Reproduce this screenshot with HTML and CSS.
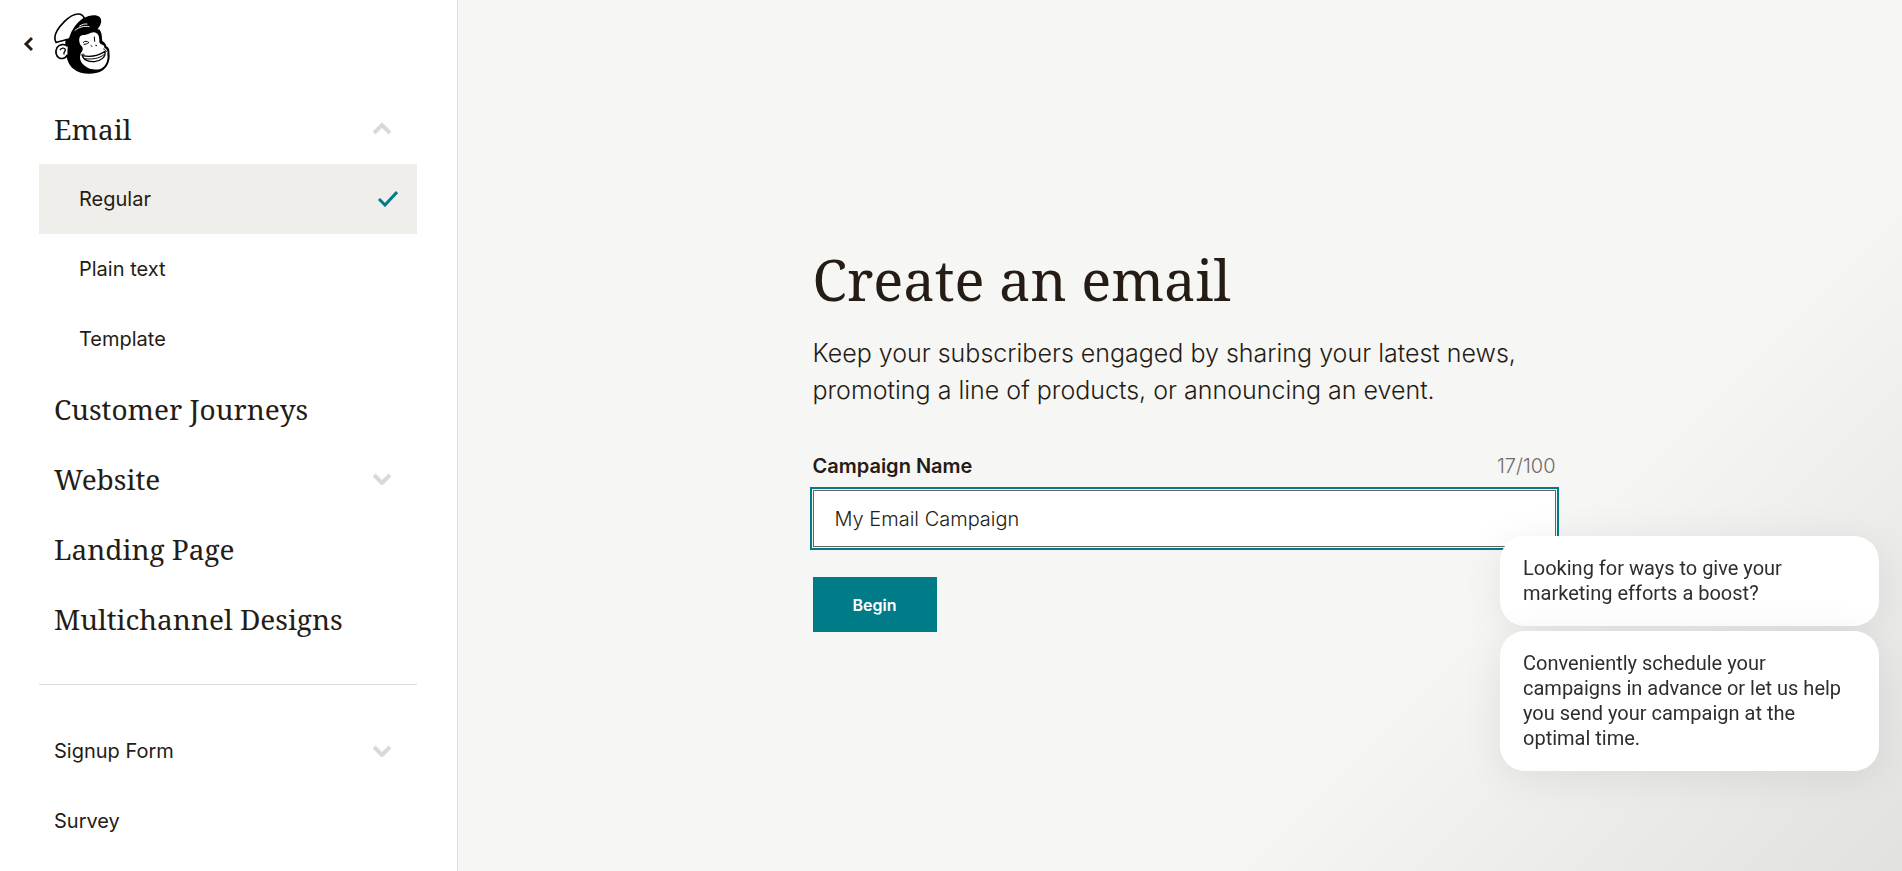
FILE: index.html
```
<!DOCTYPE html>
<html lang="en">
<head>
<meta charset="utf-8">
<meta name="viewport" content="width=device-width, initial-scale=1">
<title>Create an email</title>
<link rel="stylesheet" href="styles.css">
</head>
<body>
<div class="page">
  <aside class="sidebar">
    <header class="brand">
      <button class="back" type="button" aria-label="Back">
        <svg width="10" height="16" viewBox="0 0 10 16" fill="none" stroke="#241c15" stroke-width="3"><path d="M9 2 3 8l6 6"/></svg>
      </button>
      <a class="logo" href="#" aria-label="Home">
        <svg width="58" height="61" viewBox="9 10 174 183">
          <path fill="#000" d="M60 72C48 88 46 100 52 118c-2 22 4 46 22 60 22 18 62 18 84 6 18-10 27-32 23-56 1-10-3-16-9-18-1-8-6-12-12-16-2-12 0-22-8-34L100 46z"/>
          <path fill="#fff" d="M92 100c-4-14 0-24 12-24 10 2 18-8 30-8 12 1 18 10 17 28 0 4 4 7 9 9 5 2 7 5 6 10 7 2 11 8 9 18 3 20-4 36-19 44-16 6-36 2-48-8-10-8-16-18-15-28 0-12 10-16 8-26-2-7-8-8-9-15z"/>
          <path fill="#fff" stroke="#000" stroke-width="5" d="M21 98C12 82 24 58 46 36 62 20 78 12 90 13c8 1 14 6 16 14-20 12-36 32-44 60-12 4-30 8-41 11z"/>
          <path fill="#000" d="M104 25c16-9 38-12 48-3 9 9 4 27-8 38-14 10-28-1-42 3-14 5-24 12-36 24 4-24 18-49 38-62z"/>
          <path fill="none" stroke="#fff" stroke-width="3" stroke-linecap="round" d="M78 62c12-10 28-14 42-11M92 49c8-5 15-7 22-6"/>
          <path fill="#fff" stroke="#000" stroke-width="5" d="M56 110c-10-9-26-6-32 4-6 12-3 26 7 31 9 4 19 0 24-9"/>
          <path fill="none" stroke="#000" stroke-width="4" stroke-linecap="round" d="M34 120c4-7 15-6 15 1 0 5-6 6-4 12"/>
          <path fill="none" stroke="#000" stroke-width="3" stroke-linecap="round" d="M103 98c5-5 11-4 16 0M105 104c5 0 9-1 13-4M136 82l1 13M126 108l3 2M140 107l3 1"/>
          <path fill="#fff" stroke="#000" stroke-width="4" stroke-linejoin="round" d="M100 138c24 5 46 2 68-13 3 17-12 29-32 31-17 1-33-5-36-18z"/>
          <path fill="none" stroke="#000" stroke-width="3" stroke-linecap="round" d="M107 147c22 3 43 0 58-12M96 136c3-2 5-3 9-2M164 118c4 1 7 4 8 7"/>
        </svg>
      </a>
    </header>
    <nav class="menu" aria-label="Campaign types">
      <button class="item item-large" type="button" aria-expanded="true">Email
        <svg class="chevron" width="18" height="14" viewBox="0 0 18 14"><path d="m1 11 8-8 8 8"/></svg>
      </button>
      <a class="item item-sub item-selected" href="#" aria-current="page">Regular
        <svg class="check" width="20" height="16" viewBox="0 0 20 16"><path d="m1 8 6 6L19 1"/></svg>
      </a>
      <a class="item item-sub" href="#">Plain text</a>
      <a class="item item-sub" href="#">Template</a>
      <a class="item item-large" href="#">Customer Journeys</a>
      <button class="item item-large" type="button" aria-expanded="false">Website
        <svg class="chevron" width="18" height="12" viewBox="0 0 18 12"><path d="m1 2 8 8 8-8"/></svg>
      </button>
      <a class="item item-large" href="#">Landing Page</a>
      <a class="item item-large" href="#">Multichannel Designs</a>
      <hr class="divider">
      <button class="item" type="button" aria-expanded="false">Signup Form
        <svg class="chevron" width="18" height="12" viewBox="0 0 18 12"><path d="m1 2 8 8 8-8"/></svg>
      </button>
      <a class="item" href="#">Survey</a>
    </nav>
  </aside>
  <main class="main">
    <form class="form">
      <h1 class="title">Create an email</h1>
      <p class="intro">Keep your subscribers engaged by sharing your latest news, promoting a line of products, or announcing an event.</p>
      <div class="field-head">
        <label class="label" for="campaign-name">Campaign Name</label>
        <span class="count">17/100</span>
      </div>
      <input class="input" id="campaign-name" type="text" maxlength="100" value="My Email Campaign">
      <button class="begin" type="button">Begin</button>
    </form>
  </main>
</div>
<section class="chat" aria-label="Messages">
  <p class="bubble">Looking for ways to give your marketing efforts a boost?</p>
  <p class="bubble">Conveniently schedule your campaigns in advance or let us help you send your campaign at the optimal time.</p>
</section>
</body>
</html>
```
FILE: styles.css
```
* {
  box-sizing: border-box;
}

body {
  margin: 0;
  color: #241c15;
  background: #f6f6f4;
  font-family: Inter, "Liberation Sans", sans-serif;
  font-size: 20px;
  line-height: 24px;
}

.page {
  display: grid;
  grid-template-columns: 458px 1fr;
  min-height: 100vh;
}

/* Sidebar */
.sidebar {
  background: #fff;
  border-right: 1px solid #dedddc;
}

.brand {
  display: flex;
  align-items: center;
  padding: 13px 0 20px 20px;
}

.back {
  display: flex;
  padding: 3px;
  border: 0;
  background: none;
}

.logo {
  display: flex;
  margin-left: 16px;
}

.menu {
  padding: 0 40px 0 39px;
}

.item {
  display: flex;
  align-items: center;
  justify-content: space-between;
  width: 100%;
  height: 70px;
  padding: 0 26px 0 15px;
  border: 0;
  background: none;
  color: inherit;
  font: inherit;
  text-align: left;
  text-decoration: none;
}

.item-large {
  font-family: "Noto Serif", "Liberation Serif", serif;
  font-size: 28px;
}

.item-sub {
  padding: 0 19px 0 40px;
}

.item-selected {
  background: #efeeea;
}

.chevron {
  fill: none;
  stroke: #dbd9d2;
  stroke-width: 4;
}

.check {
  fill: none;
  stroke: #007c89;
  stroke-width: 3;
}

.divider {
  height: 1px;
  margin: 30px 0 31px;
  border: 0;
  background: #dedddc;
}

/* Campaign form */
.main {
  display: flex;
  align-items: center;
  justify-content: center;
  padding-left: 8px;
  background: linear-gradient(135deg, rgba(40, 40, 38, 0) 50%, rgba(40, 40, 38, 0.1) 100%) no-repeat right bottom / 700px 700px;
}

.form {
  width: 743px;
  max-width: 100%;
}

.title {
  margin: 0 0 16px;
  font-family: "Noto Serif", "Liberation Serif", serif;
  font-size: 56px;
  font-weight: 400;
  line-height: 80px;
}

.intro {
  margin: 0 0 45px;
  font-size: 25px;
  font-weight: 300;
  line-height: 37px;
}

.field-head {
  display: flex;
  justify-content: space-between;
  margin-bottom: 12px;
}

.label {
  font-weight: 600;
}

.count {
  color: #716b67;
  font-weight: 300;
}

.input {
  display: block;
  width: 100%;
  height: 57px;
  padding: 0 21px;
  border: 1px solid #6a6461;
  border-radius: 0;
  outline: 2px solid #007c89;
  outline-offset: 1px;
  background: #fff;
  color: inherit;
  font: inherit;
  font-weight: 300;
}

.begin {
  display: block;
  height: 55px;
  margin-top: 30px;
  padding: 0 40px;
  border: 0;
  background: #007c89;
  color: #fff;
  font: inherit;
  font-size: 16px;
  font-weight: 600;
}

/* Chat messages */
.chat {
  position: fixed;
  right: 23px;
  bottom: 100px;
  display: grid;
  gap: 5px;
  width: 379px;
  color: #2e2e2e;
  font-family: Roboto, "Liberation Sans", sans-serif;
  line-height: 25px;
}

.bubble {
  margin: 0;
  padding: 20px 23px;
  border-radius: 25px;
  background: #fff;
  box-shadow: 0 6px 40px rgba(0, 0, 0, 0.08);
}
```
